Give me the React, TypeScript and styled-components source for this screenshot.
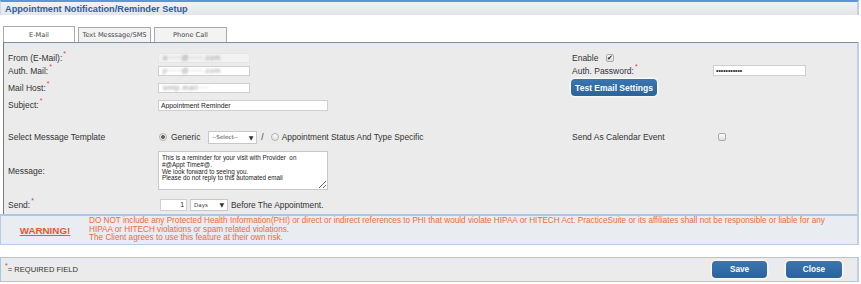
import React from 'react'
import styled, { createGlobalStyle, css } from 'styled-components'

const GlobalStyle = createGlobalStyle`
  body {
    margin: 0;
    background: #ffffff;
    font-family: "Liberation Sans", Arial, sans-serif;
    color: #333;
  }
`

const Page = styled.div`
  width: 859px;
`

const Header = styled.div`
  height: 13px;
  border-top: 2px solid #5d96d6;
  border-left: 1px solid #c6d9ef;
  border-right: 2px solid #b9d1ec;
  background: linear-gradient(#f1f2f5, #e3e5e9);
  display: flex;
  align-items: center;
  padding-left: 4px;
`

const Title = styled.h1`
  margin: 0;
  font-size: 9.2px;
  font-weight: bold;
  color: #2d5e9c;
`

const TabBar = styled.div`
  display: flex;
  align-items: flex-end;
  gap: 3px;
  margin-top: 11px;
  padding-left: 3px;
  height: 16px;
`

const Tab = styled.div<{ $active?: boolean }>`
  width: ${p => (p.$active ? 70 : 71)}px;
  height: ${p => (p.$active ? 15 : 14)}px;
  border: 1px solid #a9a9a9;
  border-bottom: none;
  background: ${p => (p.$active ? '#ffffff' : '#f3f3f3')};
  display: flex;
  align-items: center;
  justify-content: center;
  font-family: "DejaVu Sans", Verdana, sans-serif;
  font-size: 6.6px;
  color: #444;
  box-sizing: content-box;
`

const Panel = styled.div`
  margin-left: 3px;
  border-top: 1px solid #8c8c8c;
  border-left: 1px solid #7a7a7a;
  border-right: 2px solid #b9d1ec;
  background: linear-gradient(#e3ebf3 0, #ebebeb 7px);
  padding: 8px 0 1px 4px;
`

const Row = styled.div<{ $h: number; $top?: number }>`
  display: flex;
  align-items: center;
  height: ${p => p.$h}px;
  margin-top: ${p => p.$top ?? 0}px;
`

const Label = styled.div<{ $w: number }>`
  width: ${p => p.$w}px;
  flex: none;
  font-size: 8.5px;
  color: #333;
  white-space: nowrap;
`

const Field = styled.div<{ $w?: number }>`
  display: flex;
  align-items: center;
  ${p => (p.$w ? css`width: ${p.$w}px; flex: none;` : css`flex: 1;`)}
  font-size: 8.4px;
  color: #333;
  white-space: nowrap;
`

const Req = styled.sup`
  color: #e23b3b;
  font-size: 7px;
  vertical-align: top;
  position: relative;
  top: -3px;
  margin-left: 1px;
`

const BlurBox = styled.div<{ $clear?: boolean }>`
  width: 92px;
  height: 10px;
  box-sizing: border-box;
  background: ${p => (p.$clear ? '#ffffff' : '#f2f2f2')};
  border: 1px solid ${p => (p.$clear ? '#cfcfcf' : '#e6e6e6')};
  display: flex;
  align-items: center;
  padding-left: 4px;
  overflow: hidden;
`

const BlurText = styled.span`
  font-size: 7px;
  color: #8f8f8f;
  filter: blur(1.3px);
  letter-spacing: 0.5px;
`

const TextInput = styled.input<{ $w: number; $h: number; $right?: boolean }>`
  width: ${p => p.$w}px;
  height: ${p => p.$h}px;
  box-sizing: border-box;
  border: 1px solid #cfcfcf;
  background: #fff;
  padding: 0 2px;
  margin: 0;
  font-family: "Liberation Sans", Arial, sans-serif;
  font-size: 6.8px;
  color: #222;
  text-align: ${p => (p.$right ? 'right' : 'left')};
  outline: none;
`

const Check = styled.span<{ $checked?: boolean }>`
  width: 8px;
  height: 8px;
  box-sizing: border-box;
  border: 1px solid #a9a9a9;
  border-radius: 2px;
  background: linear-gradient(#fdfdfd, #dedede);
  display: inline-flex;
  align-items: center;
  justify-content: center;
  font-size: 7px;
  line-height: 1;
  color: #222;
  margin-left: 5px;
`

const Button = styled.button<{ $w: number; $narrow?: boolean }>`
  width: ${p => p.$w}px;
  height: 17px;
  border: none;
  border-radius: 4px;
  background: linear-gradient(#3a76b0, #2b639b);
  box-shadow: 0 0 0 1.5px #f7f7f7;
  color: #fff;
  font-family: ${p => (p.$narrow ? '"Liberation Sans Narrow", "Liberation Sans", Arial, sans-serif' : '"Liberation Sans", Arial, sans-serif')};
  font-weight: bold;
  font-size: ${p => (p.$narrow ? 8.2 : 8.5)}px;
  padding: 0;
  cursor: pointer;
`

const Radio = styled.span<{ $on?: boolean }>`
  width: 8px;
  height: 8px;
  box-sizing: border-box;
  border-radius: 50%;
  border: 1px solid #b2b2b2;
  background: ${p => (p.$on ? 'radial-gradient(circle, #666 0 1.6px, #eaeaea 2.2px)' : 'linear-gradient(#fafafa, #e2e2e2)')};
  display: inline-block;
  flex: none;
`

const Select = styled.div<{ $w: number; $h: number }>`
  width: ${p => p.$w}px;
  height: ${p => p.$h}px;
  box-sizing: border-box;
  border: 1px solid #c8c8c8;
  background: #fff;
  display: inline-flex;
  align-items: center;
  justify-content: space-between;
  padding: 0 3px 0 3px;
  font-family: "DejaVu Sans", Verdana, sans-serif;
  font-size: 5.6px;
  color: #444;
`

const Arrow = styled.span`
  font-size: 6px;
  color: #333;
`

const MessageBox = styled.textarea`
  width: 170px;
  height: 39px;
  box-sizing: border-box;
  border: 1px solid #c8c8c8;
  background: #fff;
  margin: 0;
  padding: 3px 3px 0;
  font-family: "Liberation Sans", Arial, sans-serif;
  font-size: 6.3px;
  line-height: 6.8px;
  color: #222;
  outline: none;
  overflow: hidden;
`

const Warning = styled.div`
  display: flex;
  align-items: center;
  height: 28px;
  border: 1px solid #b3cde9;
  border-top: 2px solid #a9c7ea;
  border-right: 2px solid #b9d1ec;
  background: #e9ecf0;
`

const WarnTitle = styled.div`
  width: 88px;
  flex: none;
  text-align: center;
  font-size: 9.8px;
  font-weight: bold;
  color: #e8572b;
  text-decoration: underline;
`

const WarnText = styled.div`
  font-size: 8.2px;
  line-height: 8.7px;
  color: #f26a3a;
  white-space: nowrap;
`

const Footer = styled.div`
  margin-top: 12px;
  height: 23px;
  border: 1px solid #aac6e6;
  border-right: 2px solid #b9d1ec;
  background: #ebebeb;
  display: flex;
  align-items: center;
  justify-content: space-between;
  padding: 0 15px 0 4px;
`

const Required = styled.div`
  font-family: "Liberation Sans Narrow", "Liberation Sans", Arial, sans-serif;
  font-size: 7.6px;
  color: #333;
  display: flex;
  align-items: flex-start;
`

const Star = styled.span`
  color: #e23b3b;
  font-size: 7px;
  position: relative;
  top: -3px;
`

const Actions = styled.div`
  display: flex;
  gap: 19px;
`

const Sep = styled.span<{ $l: number; $r: number }>`
  margin: 0 ${p => p.$r}px 0 ${p => p.$l}px;
`

export default function App() {
  return (
    <Page>
      <GlobalStyle />
      <Header>
        <Title>Appointment Notification/Reminder Setup</Title>
      </Header>

      <TabBar>
        <Tab $active>E-Mail</Tab>
        <Tab>Text Messsage/SMS</Tab>
        <Tab>Phone Call</Tab>
      </TabBar>

      <Panel>
        <Row $h={13}>
          <Label $w={150}>From (E-Mail):<Req>*</Req></Label>
          <Field $w={414}>
            <BlurBox><BlurText>a·····@·····.com</BlurText></BlurBox>
          </Field>
          <Label $w={29}>Enable</Label>
          <Field>
            <Check $checked>✔</Check>
          </Field>
        </Row>
        <Row $h={13}>
          <Label $w={150}>Auth. Mail:<Req>*</Req></Label>
          <Field $w={414}>
            <BlurBox $clear><BlurText>p·····@·····.com</BlurText></BlurBox>
          </Field>
          <Label $w={141}>Auth. Password:<Req>*</Req></Label>
          <Field>
            <TextInput $w={93} $h={11} readOnly value="•••••••••••" />
          </Field>
        </Row>
        <Row $h={21}>
          <Label $w={150}>Mail Host:<Req>*</Req></Label>
          <Field $w={413}>
            <BlurBox $clear><BlurText>smtp.mail····</BlurText></BlurBox>
          </Field>
          <Button $w={86}>Test Email Settings</Button>
        </Row>
        <Row $h={14}>
          <Label $w={150}>Subject:<Req>*</Req></Label>
          <Field>
            <TextInput $w={170} $h={11} readOnly value="Appointment Reminder" />
          </Field>
        </Row>

        <Row $h={16} $top={17}>
          <Label $w={151}>Select Message Template</Label>
          <Field $w={413}>
            <Radio $on />
            <Sep $l={4} $r={8}>Generic</Sep>
            <Select $w={49} $h={13}>--Select--<Arrow>▼</Arrow></Select>
            <Sep $l={4} $r={7}>/</Sep>
            <Radio />
            <Sep $l={3} $r={0}>Appointment Status And Type Specific</Sep>
          </Field>
          <Label $w={141}>Send As Calendar Event</Label>
          <Field>
            <Check />
          </Field>
        </Row>

        <Row $h={45} $top={3}>
          <Label $w={150}>Message:</Label>
          <Field>
            <MessageBox
              readOnly
              value={'This is a reminder for your visit with Provider  on\n#@Appt Time#@.\nWe look forward to seeing you.\nPlease do not reply to this automated email'}
            />
          </Field>
        </Row>

        <Row $h={17} $top={3}>
          <Label $w={152}>Send:<Req>*</Req></Label>
          <Field>
            <TextInput $w={27} $h={12} $right readOnly value="1" />
            <Sep $l={3} $r={0} />
            <Select $w={38} $h={12}>Days<Arrow>▼</Arrow></Select>
            <Sep $l={3} $r={0}>Before The Appointment.</Sep>
          </Field>
        </Row>
      </Panel>

      <Warning>
        <WarnTitle>WARNING!</WarnTitle>
        <WarnText>
          <div>DO NOT include any Protected Health Information(PHI) or direct or indirect references to PHI that would violate HIPAA or HITECH Act. PracticeSuite or its affiliates shall not be responsible or liable for any</div>
          <div>HIPAA or HITECH violations or spam related violations.</div>
          <div>The Client agrees to use this feature at their own risk.</div>
        </WarnText>
      </Warning>

      <Footer>
        <Required><Star>*</Star>= REQUIRED FIELD</Required>
        <Actions>
          <Button $w={55} $narrow>Save</Button>
          <Button $w={56} $narrow>Close</Button>
        </Actions>
      </Footer>
    </Page>
  )
}
